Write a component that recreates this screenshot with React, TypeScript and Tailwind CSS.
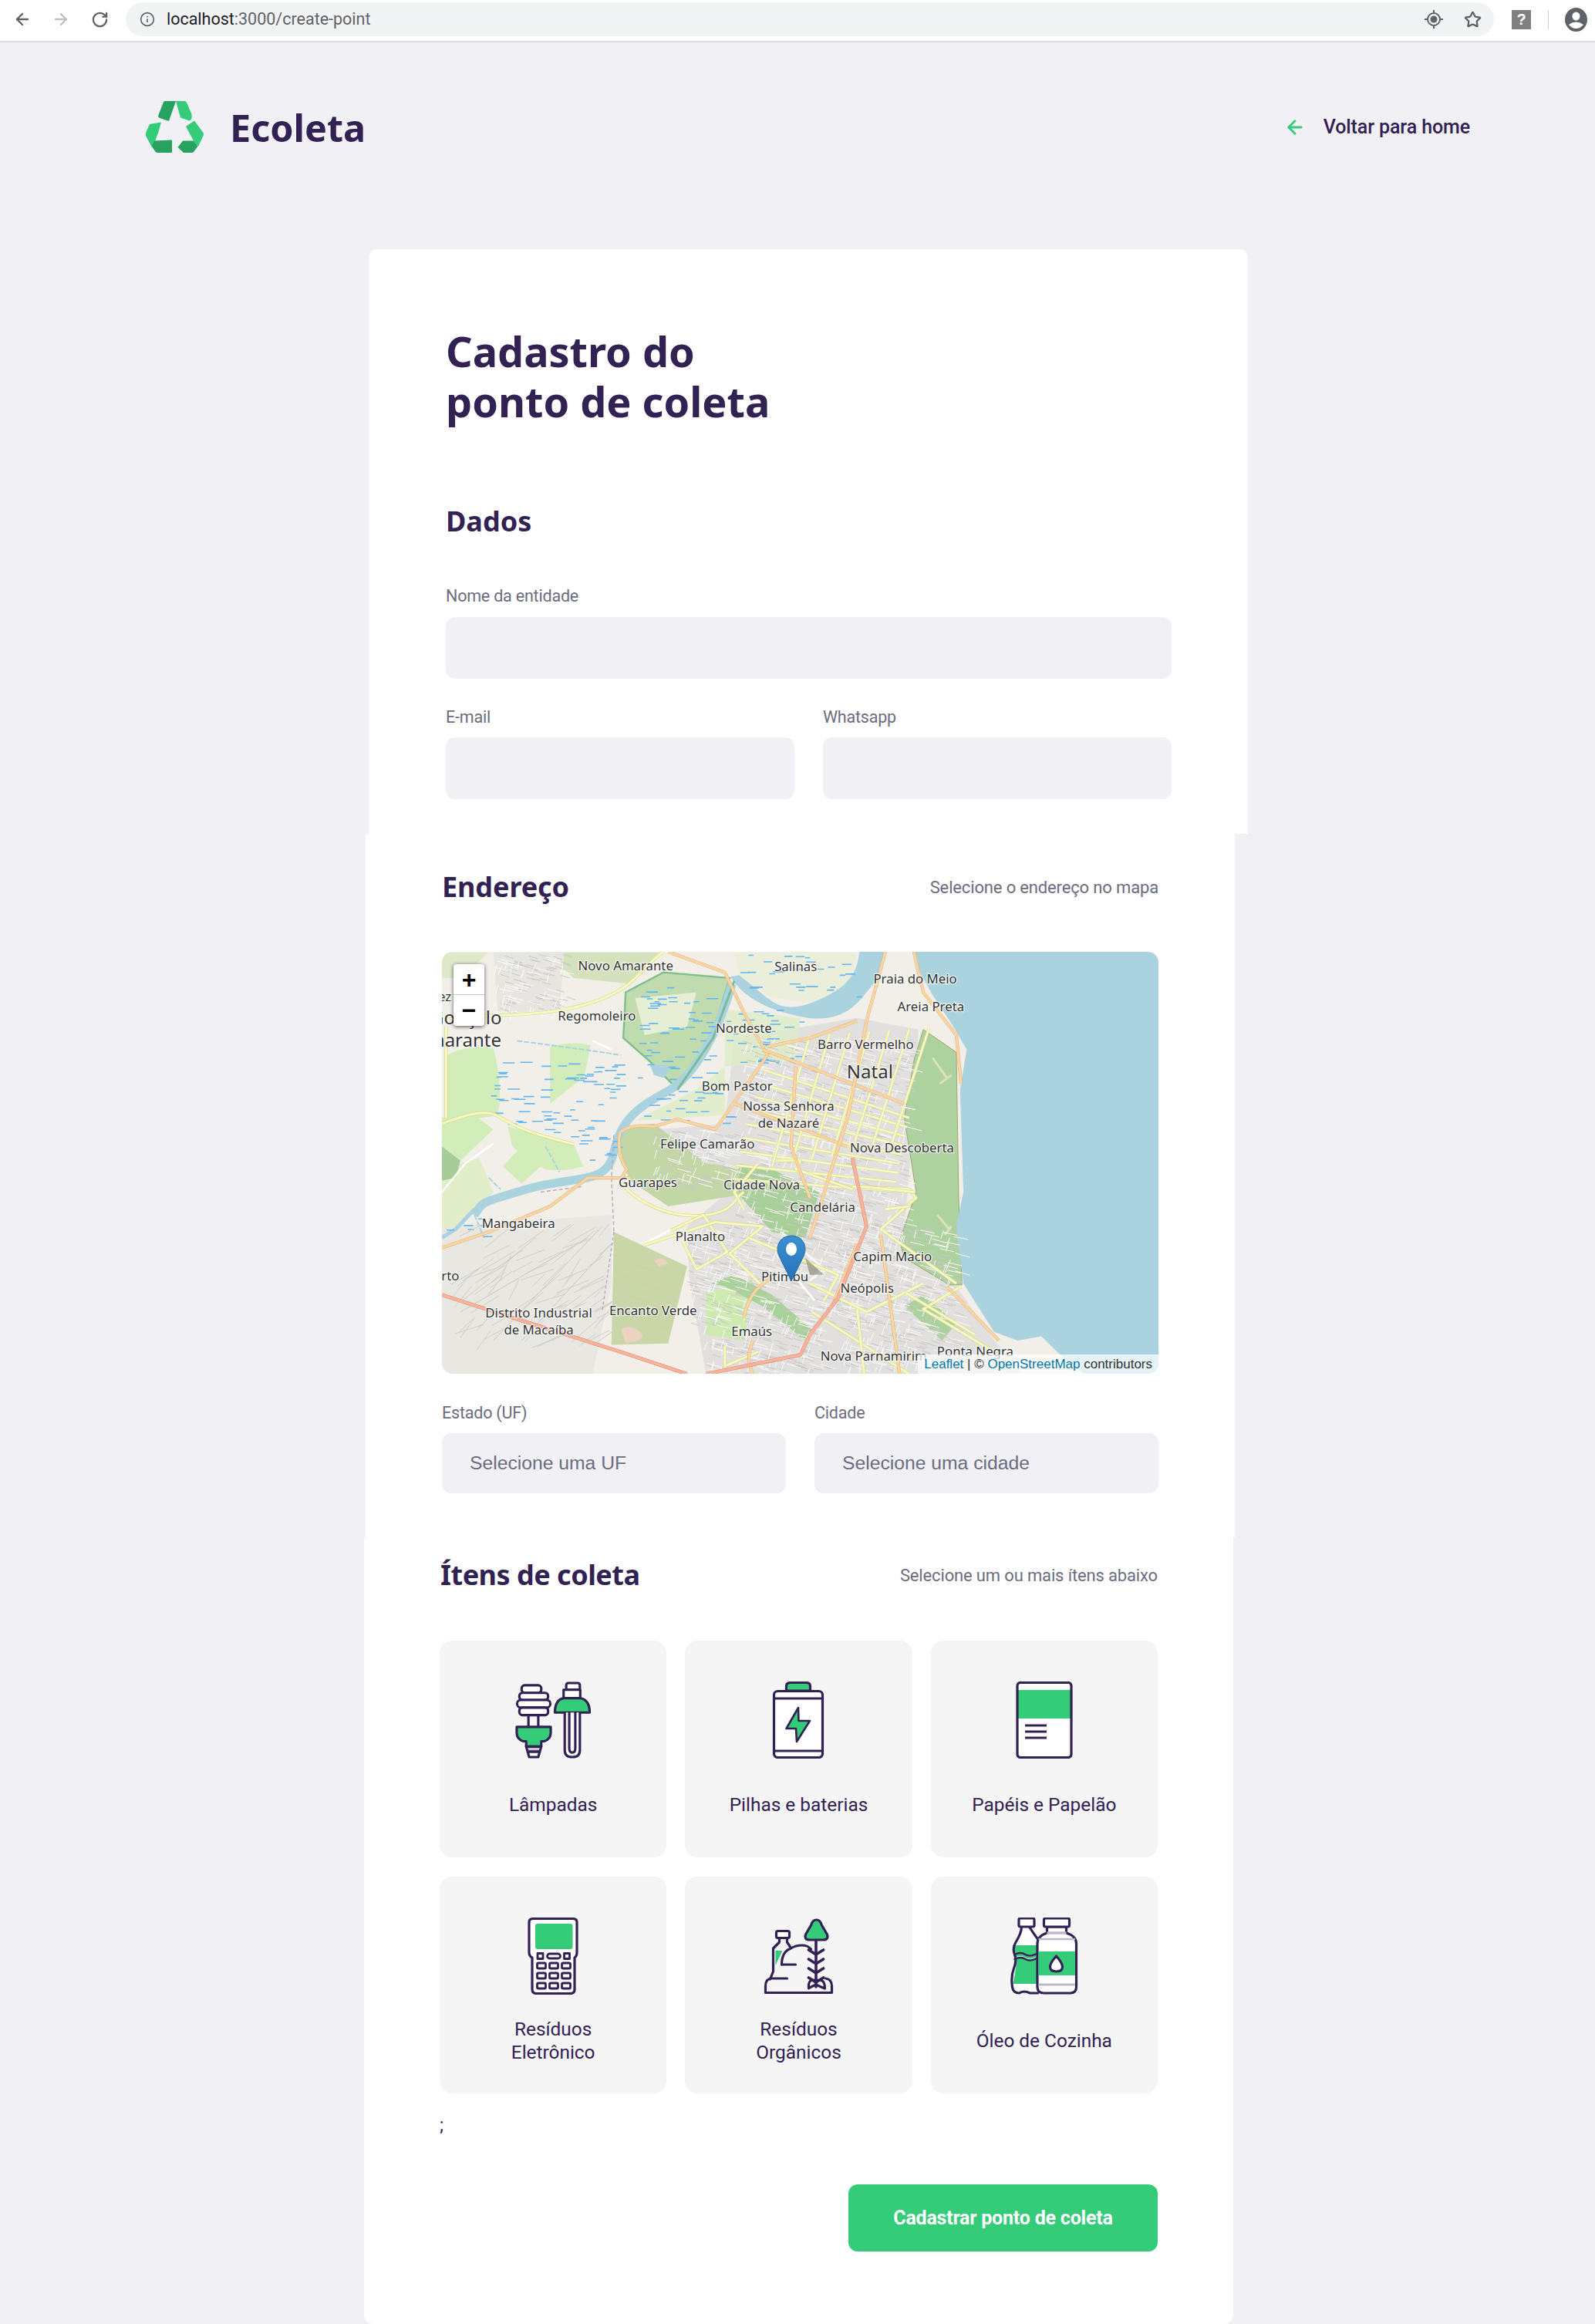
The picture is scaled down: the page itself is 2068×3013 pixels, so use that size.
import React from 'react';
import { ArrowLeft, ArrowRight, RotateCw, Info, Star } from 'lucide-react';

const roboto = { fontFamily: 'Roboto, sans-serif' };

// simple seeded random so the map texture stays the same each render
let seed = 7;
const rnd = () => {
  seed = (seed * 16807) % 2147483647;
  return (seed % 10000) / 10000;
};

const wetlands = [
  [425, 160, 590, 500, 50],
  [620, 240, 780, 430, 32],
  [120, 420, 400, 690, 70],
  [650, 45, 900, 200, 26],
  [430, 525, 640, 640, 24],
  [300, 680, 390, 780, 10],
  [25, 960, 120, 1040, 6],
];

const dashes = wetlands.flatMap(([x0, y0, x1, y1, n]) =>
  Array.from({ length: n }, () => {
    const x = x0 + rnd() * (x1 - x0);
    const y = y0 + rnd() * (y1 - y0);
    return `M${x.toFixed(0)} ${y.toFixed(0)}h${(10 + rnd() * 16).toFixed(0)}`;
  }),
);

const grey = [
  [650, 340, 1010, 800, 300],
  [640, 800, 1000, 1010, 130],
  [540, 1000, 900, 1340, 240],
  [860, 1000, 1110, 1500, 260],
  [580, 1340, 830, 1517, 90],
  [470, 660, 640, 860, 70],
  [130, 40, 290, 250, 60],
];

const streets = grey.flatMap(([x0, y0, x1, y1, n]) =>
  Array.from({ length: n }, () => {
    const x = x0 + rnd() * (x1 - x0);
    const y = y0 + rnd() * (y1 - y0);
    const v = rnd() > 0.5;
    return v ? `M${x.toFixed(0)} ${y.toFixed(0)}l${(-8 + rnd() * 4).toFixed(0)} 30` : `M${x.toFixed(0)} ${y.toFixed(0)}l30 ${(10 + rnd() * 6).toFixed(0)}`;
  }),
);

const speckle = grey.flatMap(([x0, y0, x1, y1, n]) =>
  Array.from({ length: n }, () => {
    const x = x0 + rnd() * (x1 - x0);
    const y = y0 + rnd() * (y1 - y0);
    return `M${x.toFixed(0)} ${y.toFixed(0)}l18 ${(6 + rnd() * 5).toFixed(0)}`;
  }),
);

const industrial = Array.from({ length: 80 }, () => {
  const x = 40 + rnd() * 320;
  const y = 1020 + rnd() * 420;
  return `M${x.toFixed(0)} ${y.toFixed(0)}l${(20 + rnd() * 50).toFixed(0)} ${(-30 - rnd() * 50).toFixed(0)}`;
});

const Road = ({ d, color, edge, w = 3 }: { d: string; color: string; edge: string; w?: number }) => (
  <>
    <path d={d} fill="none" stroke={edge} strokeWidth={w + 1.2} vectorEffect="non-scaling-stroke" strokeLinejoin="round" />
    <path d={d} fill="none" stroke={color} strokeWidth={w} vectorEffect="non-scaling-stroke" strokeLinejoin="round" />
  </>
);

const yellowRoads = [
  'M21 265C100 262 210 262 280 240S400 180 430 130 470 60 490 38',
  'M21 640C70 610 110 590 135 610S170 660 300 712',
  'M30 300V620',
  'M400 850C440 920 500 970 570 962S640 900 660 880',
  'M505 1015L575 960 625 1090 560 1150 530 1050',
  'M450 1065L600 985 700 1000 630 1095 700 1210',
  'M670 1040L860 1170 830 1260',
  'M800 1200L920 1300 1040 1200',
  'M805 1300L1010 1517',
  'M900 1290L915 1517',
  'M1120 1210L1040 1290 1180 1430',
  'M620 1420V1490L690 1440',
  'M890 860L1010 870 1025 900 950 1010 1110 1200',
  'M730 770L780 770 770 800 890 870',
  'M1000 1230L1150 1380',
  'M660 940L640 880 690 780',
  'M910 860L1020 880',
  'M960 940L1010 930',
];

const orangeRoads = [
  'M500 38L620 110 660 250 710 400 600 660 520 625 470 650',
  'M700 380L1000 570',
  'M640 570L880 720',
  'M960 38L920 280 880 620 800 1040',
  'M1020 38L1040 180 1110 330 1120 500',
  'M420 830L330 830 250 930 120 1020 21 1075',
  'M470 650Q420 640 398 670 390 750 412 800L400 835',
  'M710 370L800 340 900 280',
  'M850 1270L900 1060',
  'M660 1320C670 1240 690 1210 720 1180',
  'M680 1400C660 1470 680 1517 680 1517',
  'M950 1030L990 1517',
  'M1090 1210L1200 1400',
  'M770 440L760 720 800 900',
];

const Map = () => {
  const grid: string[] = [];
  for (let i = 0; i < 9; i++) grid.push(`M${700 - i * 8} ${450 + i * 48}L${1010 - i * 4} ${620 + i * 32}`);
  for (let i = 0; i < 7; i++) grid.push(`M${800 + i * 42} ${330 - i * 4}L${720 + i * 42} ${790 - i * 12}`);

  const labels: [string, number, number, number?][] = [
    ['Novo Amarante', 410, 87],
    ['Salinas', 770, 92],
    ['Praia do Meio', 1023, 133],
    ['Areia Preta', 1056, 230],
    ['Regomoleiro', 349, 265],
    ['Nordeste', 660, 308],
    ['Barro Vermelho', 918, 365],
    ['Natal', 927, 460, 24],
    ['Bom Pastor', 646, 510],
    ['Nossa Senhora', 755, 580],
    ['de Nazaré', 755, 638],
    ['Felipe Camarão', 583, 712],
    ['Nova Descoberta', 995, 727],
    ['Guarapes', 457, 848],
    ['Cidade Nova', 698, 855],
    ['Candelária', 827, 935],
    ['Mangabeira', 183, 990],
    ['Planalto', 568, 1037],
    ['Capim Macio', 975, 1107],
    ['Pitimbu', 747, 1177],
    ['Neópolis', 921, 1218],
    ['Porto', 22, 1175],
    ['Distrito Industrial', 226, 1304],
    ['de Macaíba', 226, 1365],
    ['Encanto Verde', 468, 1295],
    ['Emaús', 677, 1370],
    ['Nova Parnamirim', 935, 1455],
    ['Ponta Negra', 1150, 1440],
    ['Gonçalo', 72, 272, 24],
    ['Amarante', 56, 350, 24],
    ['Jerez', 10, 195],
  ];

  return (
    <div className="relative mt-[62px] h-[547px] w-[929px] overflow-hidden rounded-[14px] bg-[#f2efe9]">
      <svg width="929" height="547" viewBox="0 0 929 547" className="block">
        <g transform="scale(0.6124 0.37) translate(-21 -38)">
          <rect x="21" y="38" width="1517" height="1479" fill="#f2efe9" />
          {/* residential */}
          <path d="M640 340L900 270 1030 310 1010 820 1000 1010 1110 1210 1190 1400 1250 1517H580L545 1190 540 1000 640 860 470 840 480 660 620 640Z" fill="#e1e0de" />
          <path d="M21 1000L380 960V1200L340 1517H21Z" fill="#e9e7e2" />
          <path d="M30 400Q80 360 130 375 150 500 140 610 80 630 30 620ZM250 370Q300 350 335 365 330 430 320 480 280 530 250 570ZM160 650L300 710 320 790Q280 810 240 800 200 770 170 720ZM21 620Q60 600 90 610L130 660 60 770 21 760ZM200 700L250 760 190 850 150 790Z" fill="#d3edba" />
          <path d="M580 1230L680 1190 660 1400 580 1380Z" fill="#cdebb0" />
          <path d="M21 40H120L60 130 21 130Z" fill="#dfe8c9" />
          <path d="M240 40H480L420 150 300 130Z" fill="#d3e2bc" />
          <path d="M130 40H280L270 240 140 255Z" fill="#e7e5df" />
          <path d="M21 800L100 760 130 880 60 1000 21 1000Z" fill="#e2edc9" />
          {/* forests */}
          <path d="M1040 310L1110 390 1115 900 1122 1205 1095 1205 1000 1110 990 1050 1025 880 1000 620 1020 420Z" fill="#aed29f" stroke="#9aa86f" strokeWidth="1" vectorEffect="non-scaling-stroke" />
          <path d="M1060 410L1090 480M1075 500L1100 470M1070 960L1095 1010M1085 1030L1100 1000" stroke="#dbe3b8" strokeWidth="3" fill="none" vectorEffect="non-scaling-stroke" />
          <path d="M400 650L470 640 580 780 700 800 820 880 790 1040 720 1020 650 890 500 930 420 840 395 750Z" fill="#c2d6a6" />
          <path d="M650 780L720 800 820 880 790 1040 720 1020 650 890Z" fill="#a7cf97" />
          <path d="M385 1020L540 1140 500 1410 380 1415Z" fill="#c9d6a8" />
          <path d="M385 1100L500 1180M385 1160L510 1240M385 1220L505 1300M385 1280L500 1360" stroke="#d9c9a6" strokeWidth="1" fill="none" vectorEffect="non-scaling-stroke" />
          <path d="M400 1360Q420 1340 440 1370T410 1410ZM470 1120Q490 1100 500 1130L480 1140Z" fill="#ecd2c0" />
          <path d="M590 1200L640 1170 720 1240 810 1370 790 1400 700 1280 620 1210Z" fill="#a9d29a" />
          <path d="M1000 1280L1040 1240 1110 1340 1080 1400Z" fill="#abd19c" />
          <path d="M21 720L60 770 50 830 21 840Z" fill="#a8cc98" />
          <path d="M410 180L490 110 630 130 590 350 520 520 460 420 405 340Z" fill="#c0dcae" stroke="#7fbf8d" strokeWidth="2.400" vectorEffect="non-scaling-stroke" />
          <path d="M430 200L560 180 540 300 450 330Z" fill="#e6efd6" />
          <path d="M620 240L780 270 770 420 620 440 560 520 430 630 620 610Z" fill="#ddecc6" opacity="0.8" />
          <path d="M640 40H900L880 180 800 215 720 200 650 120Z" fill="#ebeedb" />
          {/* water */}
          <path d="M1022 38L1030 100 1060 190 1100 290 1132 380 1118 520 1125 880 1110 1000 1125 1200 1190 1370 1240 1400 1290 1385 1330 1450 1380 1517H1538V38Z" fill="#aad3df" />
          <path d="M632 125C650 175 690 235 780 265S900 220 925 170 950 90 958 38H905C900 100 890 160 810 212S720 205 650 120Z" fill="#aad3df" />
          <path d="M635 150C610 300 560 470 500 525S400 620 385 740 300 820 200 870 110 910 90 960" fill="none" stroke="#aad3df" strokeWidth="11" vectorEffect="non-scaling-stroke" />
          <path d="M470 470L490 480 510 440 460 430Z" fill="#aad3df" />
          <path d="M180 350Q280 370 400 400M240 720L270 810M120 830L145 870M90 960L110 1040" stroke="#aad3df" strokeWidth="2" strokeDasharray="7 2" fill="none" vectorEffect="non-scaling-stroke" />
          <path d="M640 140L595 340 520 520" fill="none" stroke="#7dbb97" strokeWidth="3" vectorEffect="non-scaling-stroke" />
          <path d="M90 940L50 1010 21 1040" fill="none" stroke="#aad3df" strokeWidth="5" vectorEffect="non-scaling-stroke" />
          <path d="M385 680L380 830 385 1020M230 880L320 860" stroke="#b9a6c4" strokeWidth="1.400" strokeDasharray="5 3" fill="none" vectorEffect="non-scaling-stroke" />
          <path d={dashes.join('')} stroke="#63b6f0" strokeWidth="1.600" fill="none" vectorEffect="non-scaling-stroke" />
          {/* street texture */}
          <path d={speckle.join('')} stroke="#c9c8c6" strokeWidth="1" fill="none" vectorEffect="non-scaling-stroke" />
          <path d={streets.join('')} stroke="#fbfaf8" strokeWidth="1" fill="none" vectorEffect="non-scaling-stroke" />
          <path d={industrial.join('')} stroke="#cfcdc8" strokeWidth="1" fill="none" vectorEffect="non-scaling-stroke" />
          <path d="M130 1400L360 1000M190 1400L380 1060M60 1300L330 1040" stroke="#c8c6c1" strokeWidth="1" fill="none" vectorEffect="non-scaling-stroke" />
          <path d="M385 1020L360 1300" stroke="#b9a6c4" strokeWidth="1.400" strokeDasharray="4 3" fill="none" vectorEffect="non-scaling-stroke" />
          <path d="M740 1020L830 1150 800 1190M730 1100L810 1260M450 1060L520 1000M21 880L70 780 130 710M340 350L380 380" stroke="#ffffff" strokeWidth="2.400" fill="none" vectorEffect="non-scaling-stroke" />
          {grid.map((d) => (
            <Road key={d} d={d} color="#f7fabf" edge="#dcd7a0" w={2.600} />
          ))}
          {yellowRoads.map((d) => (
            <Road key={d} d={d} color="#f7fabf" edge="#d8d292" />
          ))}
          {orangeRoads.map((d) => (
            <Road key={d} d={d} color="#fcd6a4" edge="#e0b47a" />
          ))}
          <Road d="M21 1240L170 1320 400 1440 540 1517" color="#f9b29c" edge="#dd8f78" w={3.600} />
          <Road d="M580 1517L780 1450 800 1380 860 1250 920 1000 890 760" color="#f9b29c" edge="#dd8f78" w={3.600} />
          <path d="M790 1110L830 1170 800 1170Z" fill="#5b5f45" opacity="0.45" />
        </g>
        {labels.map(([text, zx, zy, size]) => (
          <text
            key={text}
            x={(zx - 21) * 0.6124}
            y={(zy - 38) * 0.37 + 1}
            textAnchor="middle"
            dominantBaseline="middle"
            fontFamily="'Noto Sans', sans-serif"
            fontSize={size ?? 16.8}
            fill="#333"
            stroke="#fff"
            strokeOpacity="0.75"
            strokeWidth="2.500"
            paintOrder="stroke"
          >
            {text}
          </text>
        ))}
      </svg>

      {/* zoom control */}
      <div className="absolute left-[15px] top-[16px] w-[40px] overflow-hidden rounded-[4px] bg-white shadow-[0_1px_5px_rgba(0,0,0,0.65)]">
        <div className="flex h-[40px] items-center justify-center border-b border-[#ccc] font-['Liberation_Sans'] text-[32px] font-bold leading-none text-black">+</div>
        <div className="flex h-[40px] items-center justify-center font-['Liberation_Sans'] text-[32px] font-bold leading-none text-black">−</div>
      </div>

      {/* marker */}
      <svg className="absolute left-[434px] top-[367px]" width="38" height="61" viewBox="0 0 38 61">
        <defs>
          <linearGradient id="pin" x1="0" y1="0" x2="0" y2="1">
            <stop offset="0" stopColor="#3d8fd4" />
            <stop offset="1" stopColor="#2473b8" />
          </linearGradient>
        </defs>
        <path d="M19 1C8.500 1 1 8.500 1 18.500 1 22.500 2.500 27 5 31.500L19 60 33 31.500C35.500 27 37 22.500 37 18.500 37 8.500 29.500 1 19 1Z" fill="url(#pin)" stroke="#236ca8" strokeWidth="1" />
        <ellipse cx="19" cy="18.500" rx="7" ry="8.500" fill="#fff" />
      </svg>

      {/* attribution */}
      <div className="absolute bottom-0 right-0 flex h-[25px] items-center bg-white/70 px-[8px] font-['Liberation_Sans'] text-[17px] text-[#333]">
        <span className="text-[#0078a8]">Leaflet</span>
        <span className="whitespace-pre"> | © </span>
        <span className="text-[#0078a8]">OpenStreetMap</span>
        <span className="whitespace-pre"> contributors</span>
      </div>
    </div>
  );
};

const Logo = () => (
  <svg width="75" height="68" viewBox="0 0 75 68">
    <path d="M23 1Q24 0 26 0H39L30 26 18 22Q15.500 21 16.500 18Z" fill="#27a35f" />
    <path d="M39 0H50Q52 0 53 2L59.500 17Q60.500 24 56.500 25.500L45 21.500Z" fill="#34cb79" />
    <path d="M5 30L20 27.500 16.500 40 12 52 8 60 0.500 46Q-0.500 43 0.500 40Z" fill="#34cb79" />
    <path d="M10.500 51.500L34 50.500V67H15Q13 67 12 65L8 59Z" fill="#27a35f" />
    <path d="M63 25.500L74.500 41Q75.500 43 74.500 45L68 59 62 51.500 52 33Z" fill="#34cb79" />
    <path d="M48 51.500H62L67.500 58.500 62 66Q61 67 59 67H49L41.500 60Z" fill="#27a35f" />
  </svg>
);

const ink = '#322153';
const line = { fill: 'none', stroke: ink, strokeWidth: 3.2, strokeLinejoin: 'round' as const, strokeLinecap: 'round' as const };
const green = '#34cb79';

const LampIcon = () => (
  <svg width="100" height="100" viewBox="7.500 9 100 102">
    <rect x="16" y="14" width="26" height="10" rx="4" {...line} fill="#fff" />
    <rect x="13" y="24" width="38" height="9.500" rx="4" {...line} fill="#fff" />
    <rect x="10" y="33.500" width="44" height="10" rx="5" {...line} fill="#fff" />
    <rect x="13" y="43.500" width="38" height="10" rx="4" {...line} fill="#fff" />
    <path d="M25 54V69M38 54V69" {...line} />
    <path d="M9.500 69H54.500V77Q54.500 85 46 88H42V95H22V88H18Q9.500 85 9.500 77Z" {...line} fill={green} />
    <path d="M22 95H42L40 102H24Z" {...line} fill="#c9c5d0" />
    <path d="M24 102H40L38 109H26Z" {...line} fill="#fff" />
    <path d="M75 20V14Q75 11 78 11H90Q93 11 93 14V20Z" {...line} fill="#fff" />
    <rect x="71.500" y="20" width="22" height="11" {...line} fill="#fff" />
    <path d="M60 50Q60 33 72 31H93Q106 33 106 50Z" {...line} fill={green} />
    <path d="M73 50V100Q73 109 83 109 93 109 93 100V50" {...line} fill="#fff" />
    <path d="M79 50V97Q79 103 83 103 87 103 87 97V50" {...line} />
  </svg>
);

const BatteryIcon = () => (
  <svg width="100" height="100" viewBox="0 0 100 100">
    <path d="M34.500 12V6Q34.500 1.500 40 1.500H60Q65.500 1.500 65.500 6V12Z" {...line} fill={green} />
    <rect x="18.500" y="12.500" width="63" height="86" rx="5" {...line} fill="#fff" />
    <path d="M18.500 22H81.500M18.500 90H81.500" {...line} />
    <path d="M50 34L34.500 61H47L48 78 65 51H50.500Z" fill={green} stroke={ink} strokeWidth="2.600" strokeLinejoin="round" />
  </svg>
);

const PaperIcon = () => (
  <svg width="100" height="100" viewBox="0 0 100 100">
    <rect x="15" y="1.500" width="70" height="97" rx="4" fill="#fff" />
    <rect x="15" y="11" width="70" height="37" fill={green} />
    <rect x="15" y="1.500" width="70" height="97" rx="4" {...line} />
    <path d="M25 57H53M25 65H53M25 73H53" fill="none" stroke={ink} strokeWidth="3" />
  </svg>
);

const DeviceIcon = () => {
  const keys = [69, 82, 95];
  return (
    <svg width="100" height="100" viewBox="-13.500 10 100 100">
      <path d="M5.500 16Q5.500 11.500 11 11.500H62Q67.500 11.500 67.500 16V55Q67.500 60 64.500 62V103Q64.500 108.500 59 108.500H15Q9.500 108.500 9.500 103V62Q5.500 60 5.500 55Z" {...line} fill="#fff" />
      <rect x="13.500" y="18" width="48.500" height="33" rx="3" fill={green} />
      <rect x="16.500" y="56.500" width="7" height="7" {...line} strokeWidth={2.800} />
      <rect x="29" y="57" width="17" height="6" rx="3" {...line} strokeWidth={2.800} />
      <rect x="51" y="56.500" width="7" height="7" {...line} strokeWidth={2.800} />
      {keys.map((y) => (
        <g key={y}>
          <rect x="16" y={y} width="11" height="7" rx="1.500" {...line} strokeWidth={2.800} />
          <rect x="32" y={y} width="11" height="7" rx="1.500" {...line} strokeWidth={2.800} />
          <rect x="48" y={y} width="11" height="7" rx="1.500" {...line} strokeWidth={2.800} />
        </g>
      ))}
    </svg>
  );
};

const OrganicIcon = () => (
  <svg width="100" height="100" viewBox="5.500 10 100 100">
    <path d="M26 53L35 53 26 72Z" fill={green} />
    <rect x="27" y="27.500" width="17" height="9" rx="2" {...line} fill="#fff" />
    <path d="M31 36.500V42L23 50V80L19 90" {...line} />
    <path d="M41 36.500V42L45 48" {...line} />
    <path d="M20 89Q13 90 13 99V107.500H99V99Q99 90 91 89" {...line} />
    <path d="M22 89H41M34 71H52" {...line} />
    <path d="M34 71Q34 54 46 50 52 46 60 46 68 46 72 51" {...line} />
    <path d="M79 13Q84 13 86 20L93 32Q95 39 88 39H70Q63 39 65 32L72 20Q74 13 79 13Z" {...line} fill={green} />
    <path d="M78.500 40V100" {...line} strokeWidth={3.600} />
    <path d="M69 52L78.500 58 88 52M69 64L78.500 70 88 64M69 76L78.500 82 88 76M69 88L78.500 94 88 88" {...line} strokeWidth={3.600} />
    <path d="M78.500 92Q68 88 69 102L72 100 78.500 97 85 100 90 102Q90 88 78.500 92Z" {...line} />
  </svg>
);

const OilIcon = () => (
  <svg width="100" height="100" viewBox="4.500 10 100 100">
    <path d="M24 22Q24 30 17 43 13 50 16 58 19 66 15 76 11 86 13 100 14 108 22 108 28 104 36 108H48V22Z" fill="#fff" />
    <path d="M15.500 46H46V96H14Q16 86 18 72 18 60 15.500 46Z" fill={green} />
    <path d="M16 58Q24 54 30 58T46 56M16 63Q24 59 30 63T46 61" fill="none" stroke="#fff" strokeWidth="2" />
    <path d="M16 58Q24 54 30 58T46 56" {...line} strokeWidth={2.500} />
    <path d="M16 64Q24 60 30 64T46 62" {...line} strokeWidth={2.500} />
    <path d="M25 22Q25 30 17 43 13 50 16 58 19 66 15 76 11 86 13 100 14 108 22 108 28 104 36 108H46M35 22Q40 30 46 38" {...line} />
    <rect x="21.500" y="11" width="20" height="11" rx="2" {...line} fill="#fff" />
    <path d="M58 22H83V30Q96 34 96 44V100Q96 108 88 108H54Q45.500 108 45.500 100V44Q45.500 34 58 30Z" {...line} fill="#fff" />
    <rect x="47" y="54" width="47.500" height="31" fill={green} />
    <path d="M47 97H94.500" stroke="#bdb8c8" strokeWidth="3" />
    <path d="M47 38H94.500" stroke="#bdb8c8" strokeWidth="2.500" />
    <path d="M58 30H83" stroke="#bdb8c8" strokeWidth="3.500" />
    <rect x="54" y="11" width="33" height="11" rx="2" {...line} fill="#fff" />
    <path d="M70 60Q78 69 78 74 78 80 70 80 62 80 62 74 62 69 70 60Z" {...line} fill="#fff" />
  </svg>
);

const items = [
  { icon: <LampIcon />, title: ['Lâmpadas'] },
  { icon: <BatteryIcon />, title: ['Pilhas e baterias'] },
  { icon: <PaperIcon />, title: ['Papéis e Papelão'] },
  { icon: <DeviceIcon />, title: ['Resíduos', 'Eletrônico'] },
  { icon: <OrganicIcon />, title: ['Resíduos', 'Orgânicos'] },
  { icon: <OilIcon />, title: ['Óleo de Cozinha'] },
];

const Label = ({ children, className = '' }: { children: React.ReactNode; className?: string }) => (
  <label className={`block text-[21.500px] leading-[26px] tracking-[-0.2px] text-[#6c6c80] ${className}`} style={roboto}>
    {children}
  </label>
);

const headingFont = "font-['Noto_Sans'] font-bold text-[#322153]";

export default function App() {
  return (
    <div className="min-h-[3013px] w-[2068px] overflow-hidden bg-[#f0f0f5]" style={roboto}>
      {/* browser toolbar */}
      <div className="flex h-[55px] items-center border-b-2 border-[#dadce0] bg-white pb-[3px] pl-[17px] pr-[10px]">
        <ArrowLeft size={24} strokeWidth={2.400} className="text-[#5f6368]" />
        <ArrowRight size={24} strokeWidth={2.400} className="ml-[26px] text-[#bdc1c6]" />
        <RotateCw size={23} strokeWidth={2.400} className="ml-[27px] text-[#5f6368]" />
        <div className="ml-[22px] flex h-[44px] w-[1777px] items-center rounded-full bg-[#f1f3f4] pl-[18px] pr-[16px]">
          <Info size={20} className="text-[#5f6368]" />
          <span className="ml-[15px] font-['Roboto'] text-[21.500px] text-[#5f6368]">
            <span className="text-[#202124]">localhost</span>:3000/create-point
          </span>
          <svg className="ml-auto" width="24" height="24" viewBox="0 0 24 24" fill="none" stroke="#5f6368" strokeWidth="2">
            <circle cx="12" cy="12" r="8" />
            <circle cx="12" cy="12" r="3.500" fill="#5f6368" />
            <path d="M12 0V4M12 20V24M0 12H4M20 12H24" />
          </svg>
          <Star size={23} strokeWidth={2.400} className="ml-[27px] text-[#5f6368]" />
        </div>
        <div className="ml-[23px] flex h-[25px] w-[25px] items-center justify-center bg-[#808080] font-['Liberation_Sans'] text-[20px] font-bold text-white">?</div>
        <div className="ml-[22px] h-[25px] w-px bg-[#d0d0d0]" />
        <svg className="ml-[21px]" width="29" height="31" viewBox="0 0 29 31">
          <ellipse cx="14.500" cy="15.500" rx="14.500" ry="15.500" fill="#5f6368" />
          <ellipse cx="14.500" cy="11" rx="5" ry="5.500" fill="#fff" />
          <path d="M5 22Q14.500 15 24 22 20 27 14.500 27 9 27 5 22Z" fill="#fff" />
        </svg>
      </div>

      {/* page header */}
      <header className="flex h-[220px] items-center justify-between pl-[189px] pr-[162px]">
        <div className="flex items-center gap-[34px]">
          <Logo />
          <span className={`${headingFont} text-[48.500px] leading-none`}>Ecoleta</span>
        </div>
        <a className="flex items-center text-[25px] font-medium tracking-[-0.1px] text-[#322153]">
          <ArrowLeft size={28} strokeWidth={2.400} className="text-[#34cb79]" />
          <span className="ml-[23px]">Voltar para home</span>
        </a>
      </header>

      <main className="mt-[48px]">
        <section className="ml-[478px] h-[758px] w-[1140px] rounded-t-[12px] bg-white pl-[100px] pr-[99px] pt-[100px]">
          <h1 className={`${headingFont} text-[54px] leading-[65px]`}>
            Cadastro do
            <br />
            ponto de coleta
          </h1>
          <h2 className={`${headingFont} mt-[101px] text-[36px] leading-[44px]`}>Dados</h2>
          <Label className="mt-[62px]">Nome da entidade</Label>
          <input className="mt-[14px] block h-[80px] w-full rounded-[12px] bg-[#f0f0f5]" />
          <div className="mt-[37px] grid grid-cols-2 gap-[37px]">
            <div>
              <Label>E-mail</Label>
              <input className="mt-[13px] block h-[80px] w-full rounded-[12px] bg-[#f0f0f5]" />
            </div>
            <div>
              <Label>Whatsapp</Label>
              <input className="mt-[13px] block h-[80px] w-full rounded-[12px] bg-[#f0f0f5]" />
            </div>
          </div>
        </section>

        <section className="ml-[474px] h-[912px] w-[1127px] bg-white px-[99px] pt-[47px]">
          <div className="flex h-[44px] items-center justify-between">
            <h2 className={`${headingFont} text-[36px] leading-[44px] tracking-[-0.1px]`}>Endereço</h2>
            <span className="text-[22px] tracking-[-0.15px] text-[#6c6c80]">Selecione o endereço no mapa</span>
          </div>
          <Map />
          <div className="mt-[38px] grid grid-cols-2 gap-[37px]">
            <div>
              <Label>Estado (UF)</Label>
              <div className="mt-[13px] flex h-[78px] items-center rounded-[12px] bg-[#f0f0f5] pl-[36px] font-['Liberation_Sans'] text-[24.700px] text-[#6c6c80]">Selecione uma UF</div>
            </div>
            <div>
              <Label>Cidade</Label>
              <div className="mt-[13px] flex h-[78px] items-center rounded-[12px] bg-[#f0f0f5] pl-[36px] font-['Liberation_Sans'] text-[24.700px] text-[#6c6c80]">Selecione uma cidade</div>
            </div>
          </div>
        </section>

        <section className="ml-[472px] h-[1020px] w-[1127px] rounded-b-[12px] bg-white px-[98px] pt-[27px]">
          <div className="flex h-[44px] items-center justify-between">
            <h2 className={`${headingFont} ml-px text-[36px] leading-[44px] tracking-[-0.5px]`}>Ítens de coleta</h2>
            <span className="text-[22px] tracking-[-0.15px] text-[#6c6c80]">Selecione um ou mais ítens abaixo</span>
          </div>
          <ul className="mt-[63px] grid grid-cols-3 gap-x-[24px] gap-y-[25px]">
            {items.map((item) => (
              <li key={item.title.join(' ')} className="flex h-[281px] flex-col items-center rounded-[16px] bg-[#f5f5f5] pt-[53px]">
                {item.icon}
                <span className="mt-[30px] flex h-[60px] flex-col items-center justify-center text-center text-[24.400px] leading-[30px] text-[#322153]">
                  {item.title.map((t) => (
                    <span key={t}>{t}</span>
                  ))}
                </span>
              </li>
            ))}
          </ul>
          <p className="mt-[28px] text-[24px] leading-[26px] text-[#322153]">;</p>
          <button className="ml-auto mt-[64px] block h-[87px] w-[401px] rounded-[12px] bg-[#34cb79] text-[25px] font-bold tracking-[-0.2px] text-white">Cadastrar ponto de coleta</button>
        </section>
      </main>
    </div>
  );
}
